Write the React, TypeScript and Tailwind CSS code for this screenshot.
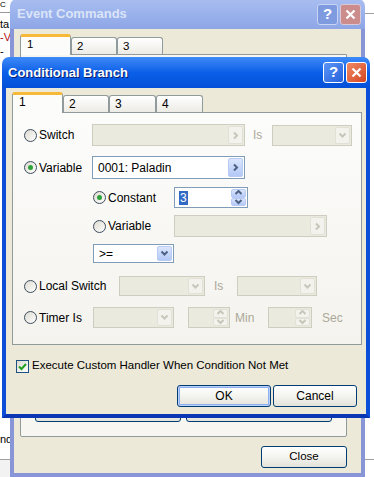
import React from 'react';

type Dir = 'down' | 'right' | 'up';

const chevron: Record<Dir, string> = {
  down: 'M1.5 2.5l3 3 3-3',
  up: 'M1.5 5.5l3-3 3 3',
  right: 'M3 1.5l3 3-3 3',
};

const ArrowBtn = ({ dir, off, small }: { dir: Dir; off?: boolean; small?: boolean }) => (
  <span
    className={`flex flex-1 items-center justify-center rounded-[2px] border ${
      off ? 'border-[#e3e1d7] bg-[#f3f2ed]' : 'border-[#b7cbf5] bg-gradient-to-b from-[#dbe6fd] to-[#b3c8f6]'
    }`}
  >
    <svg width="9" height={small ? 6 : 9} viewBox={small ? '0 1.5 9 6' : '0 0 9 9'}>
      <path d={chevron[dir]} fill="none" stroke={off ? '#c8c6ba' : '#4d6185'} strokeWidth="2" />
    </svg>
  </span>
);

const Box = ({ w, h, off, dir, children }: { w: string; h: string; off?: boolean; dir: Dir; children?: React.ReactNode }) => (
  <div className={`flex ${w} ${h} border p-px ${off ? 'border-[#cfcdc0] bg-[#ebeadf]' : 'border-[#7f9db9] bg-white'}`}>
    <span className="flex flex-1 items-center pl-[4px]">{children}</span>
    <span className="flex w-[15px] flex-col">
      <ArrowBtn dir={dir} off={off} />
    </span>
  </div>
);

const Spin = ({ w, h, off, children }: { w: string; h: string; off?: boolean; children?: React.ReactNode }) => (
  <div className={`flex ${w} ${h} border p-px ${off ? 'border-[#cfcdc0] bg-[#ebeadf]' : 'border-[#7f9db9] bg-white'}`}>
    <span className="flex flex-1 items-center pl-[3px]">{children}</span>
    <span className="flex w-[15px] flex-col">
      <ArrowBtn dir="up" off={off} small />
      <ArrowBtn dir="down" off={off} small />
    </span>
  </div>
);

const Radio = ({ on, label, w }: { on?: boolean; label: string; w: string }) => (
  <span className={`flex ${w} items-center gap-[2px]`}>
    <span className="flex h-[13px] w-[13px] shrink-0 items-center justify-center rounded-full border border-[#3d4d5e] bg-gradient-to-br from-[#dcdad0] to-white">
      {on && <span className="h-[5px] w-[5px] rounded-full bg-[#2ea23a]" />}
    </span>
    <span>{label}</span>
  </span>
);

const Btn = ({ w, label, primary }: { w: string; label: string; primary?: boolean }) => (
  <div
    className={`flex h-[22px] ${w} items-center justify-center rounded-[3px] border border-[#003c74] bg-gradient-to-b from-white via-[#f4f4f0] to-[#e3e2da] ${
      primary ? 'shadow-[inset_0_0_0_1px_#b8d0f8,inset_0_0_0_2px_#8fb0ec]' : ''
    }`}
  >
    {label}
  </div>
);

const Tab = ({ label, w, sel }: { label: string; w: string; sel?: boolean }) =>
  sel ? (
    <div className={`relative z-10 -mb-px h-[21px] ${w} rounded-t-[3px] border-x border-[#919b9c] border-t-[3px] border-t-[#f7b938] bg-[#fcfcfa] pl-[6px] leading-[15px]`}>
      {label}
    </div>
  ) : (
    <div className={`mt-[3px] h-[17px] ${w} rounded-t-[3px] border-x border-t border-[#919b9c] bg-gradient-to-b from-white to-[#ecebe5] pl-[5px] leading-[17px]`}>
      {label}
    </div>
  );

const TitleBtns = ({ active }: { active?: boolean }) => (
  <div className="flex gap-[2px]">
    <span
      className={`flex h-[21px] w-[21px] items-center justify-center rounded-[3px] border text-[15px] font-bold text-white ${
        active ? 'border-white bg-gradient-to-br from-[#5c95f5] to-[#2560dc]' : 'border-[#c9d4f2] bg-[#7f9be0] text-[#e6ecfa]'
      }`}
    >
      ?
    </span>
    <span
      className={`flex h-[21px] w-[21px] items-center justify-center rounded-[3px] border ${
        active ? 'border-white bg-gradient-to-br from-[#ee8a64] to-[#d4431d]' : 'border-[#d9c8d6] bg-[#cc8c8c]'
      }`}
    >
      <svg width="11" height="11" viewBox="0 0 11 11">
        <path d="M1.5 1.5l8 8M9.5 1.5l-8 8" stroke="white" strokeWidth="2.2" />
      </svg>
    </span>
  </div>
);

export default function App() {
  return (
    <div className="relative h-[477px] w-[374px] overflow-hidden bg-white text-[11.5px] text-black [font-family:'Liberation_Sans',Arial,sans-serif]">
      {/* desktop behind: bits of text and lines */}
      <div className="absolute left-0 top-0 text-[8px] leading-[9px]">C</div>
      <div className="absolute left-0 top-[12px] h-px w-[10px] bg-[#9a9a9a]" />
      <div className="absolute left-0 top-[18px] text-[11px] leading-[13px]">ta</div>
      <div className="absolute left-0 top-[31px] text-[11px] leading-[13px] text-[#b01010]">-V</div>
      <div className="absolute left-0 top-[46px] text-[11px] leading-[10px]">-</div>
      <div className="absolute left-0 top-[433px] text-[11px] leading-[13px]">nd</div>
      <div className="absolute left-0 top-[459px] h-[18px] w-[10px] border-t border-[#a0a0a0] bg-[#f2f2f2]" />
      <div className="absolute right-0 top-[13px] h-px w-[10px] bg-[#a0a0a0]" />
      <div className="absolute right-0 top-[459px] h-px w-[10px] bg-[#a0a0a0]" />

      {/* Event Commands (inactive, behind) */}
      <div className="absolute left-[10px] top-[-1px] flex h-[478px] w-[355px] flex-col">
        <div className="flex h-[30px] items-center justify-between rounded-t-[7px] bg-gradient-to-b from-[#a9bdf0] via-[#9ab2ec] to-[#8fa6e6] pl-[7px] pr-[4px]">
          <span className="text-[13px] font-bold text-[#dbe4f8]">Event Commands</span>
          <TitleBtns />
        </div>
        <div className="flex flex-1 flex-col border-x-[4px] border-b-[4px] border-[#8896d8] bg-[#ece9d8] px-[6px]">
          <div className="mt-[5px] flex">
            <Tab label="1" w="w-[51px]" sel />
            <Tab label="2" w="w-[46px]" />
            <Tab label="3" w="w-[46px]" />
          </div>
          <div className="mr-[8px] flex flex-1 items-end justify-between rounded-b-[2px] border border-[#919b9c] bg-[#f7f6f1] px-[14px] pb-[14px]">
            <Btn w="w-[146px]" label="" />
            <Btn w="w-[146px]" label="" />
          </div>
          <div className="mb-[5px] mt-[9px] flex justify-end pr-[8px]">
            <Btn w="w-[86px]" label="Close" />
          </div>
        </div>
      </div>

      {/* Conditional Branch (active) */}
      <div className="absolute left-[2px] top-[57px] flex h-[361px] w-[368px] flex-col">
        <div className="flex h-[31px] items-center justify-between rounded-t-[7px] bg-gradient-to-b from-[#3d8af7] via-[#0a5fe8] to-[#0550d8] pl-[6px] pr-[3px]">
          <span className="text-[13px] font-bold text-white [text-shadow:1px_1px_#0a1e6e]">Conditional Branch</span>
          <TitleBtns active />
        </div>
        <div className="flex flex-1 flex-col border-x-[4px] border-b-[4px] border-x-[#0c4ed8] border-b-[#0a36b4] bg-[#ece9d8] px-[6px]">
          <div className="mt-[4px] flex text-[12px]">
            <Tab label="1" w="w-[51px]" sel />
            <Tab label="2" w="w-[46px]" />
            <Tab label="3" w="w-[47px]" />
            <Tab label="4" w="w-[47px]" />
          </div>

          <div className="flex h-[233px] w-[350px] flex-col border border-[#919b9c] bg-gradient-to-b from-[#fcfcfb] to-[#f4f3ee] text-[12px]">
            <div className="ml-[11px] mt-[11px] flex h-[22px] items-center">
              <Radio label="Switch" w="w-[68px]" />
              <Box w="w-[153px]" h="h-[22px]" dir="right" off />
              <span className="ml-[8px] w-[19px] text-[#aca899]">Is</span>
              <Box w="w-[80px]" h="h-[21px]" dir="down" off />
            </div>
            <div className="ml-[11px] mt-[10px] flex h-[23px] items-center">
              <Radio label="Variable" w="w-[68px]" on />
              <Box w="w-[153px]" h="h-[23px]" dir="right">
                0001: Paladin
              </Box>
            </div>
            <div className="ml-[80px] mt-[8px] flex h-[21px] items-center">
              <Radio label="Constant" w="w-[81px]" on />
              <Spin w="w-[74px]" h="h-[21px]">
                <span className="bg-[#316ac5] px-px leading-[14px] text-white">3</span>
              </Spin>
            </div>
            <div className="ml-[80px] mt-[7px] flex h-[22px] items-center">
              <Radio label="Variable" w="w-[81px]" />
              <Box w="w-[153px]" h="h-[22px]" dir="right" off />
            </div>
            <div className="ml-[80px] mt-[7px] flex h-[19px] items-center">
              <Box w="w-[81px]" h="h-[19px]" dir="down">
                &gt;=
              </Box>
            </div>
            <div className="ml-[11px] mt-[13px] flex h-[20px] items-center">
              <Radio label="Local Switch" w="w-[95px]" />
              <Box w="w-[86px]" h="h-[20px]" dir="down" off />
              <span className="ml-[9px] w-[23px] text-[#aca899]">Is</span>
              <Box w="w-[80px]" h="h-[20px]" dir="down" off />
            </div>
            <div className="ml-[11px] mt-[11px] flex h-[21px] items-center">
              <Radio label="Timer Is" w="w-[69px]" />
              <Box w="w-[81px]" h="h-[21px]" dir="down" off />
              <span className="ml-[14px]">
                <Spin w="w-[42px]" h="h-[21px]" off />
              </span>
              <span className="ml-[5px] w-[33px] text-[#aca899]">Min</span>
              <Spin w="w-[44px]" h="h-[21px]" off />
              <span className="ml-[10px] text-[#aca899]">Sec</span>
            </div>
          </div>

          <div className="ml-[4px] mt-[14px] flex h-[14px] items-center gap-[3px]">
            <span className="flex h-[13px] w-[13px] items-center justify-center border border-[#1c5180] bg-gradient-to-br from-[#dcdad0] to-white">
              <svg width="9" height="9" viewBox="0 0 9 9">
                <path d="M1 4.5l2.5 2.5 4.5-5" fill="none" stroke="#21a121" strokeWidth="2" />
              </svg>
            </span>
            <span>Execute Custom Handler When Condition Not Met</span>
          </div>

          <div className="mt-[12px] flex justify-end gap-[2px] pr-[3px] text-[12px]">
            <Btn w="w-[94px]" label="OK" primary />
            <Btn w="w-[84px]" label="Cancel" />
          </div>
        </div>
      </div>
    </div>
  );
}
